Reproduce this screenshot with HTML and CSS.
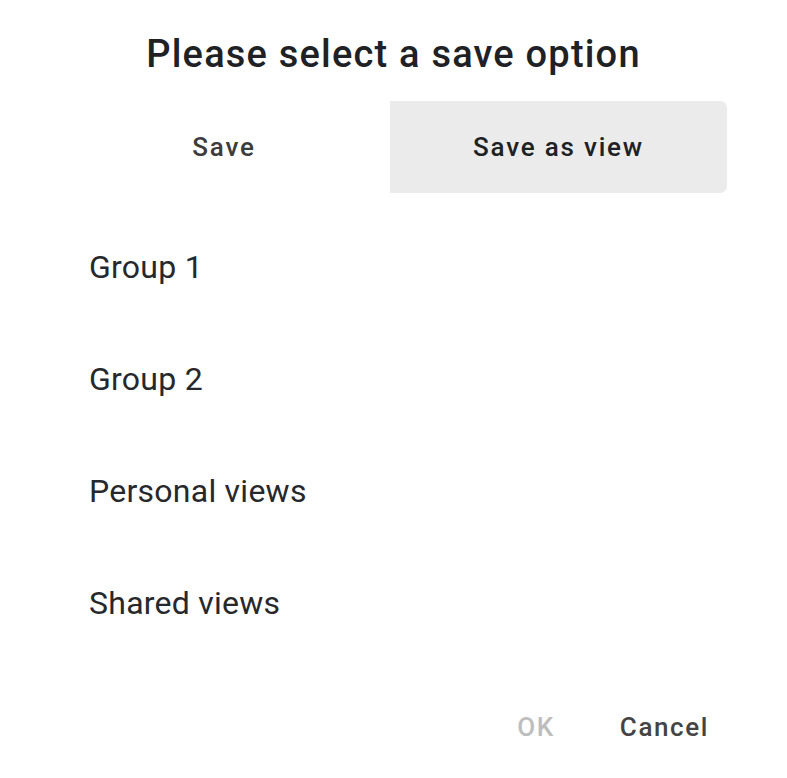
FILE: index.html
```html
<!DOCTYPE html>
<html>
<head>
<meta charset="utf-8">
<link rel="stylesheet" href="styles.css">
</head>
<body>
<div class="dialog">
  <h1 class="title">Please select a save option</h1>
  <div class="tabs">
    <div class="tab first">Save</div>
    <div class="tab active">Save as view</div>
  </div>
  <ul class="list">
    <li class="item">Group 1</li>
    <li class="item">Group 2</li>
    <li class="item">Personal views</li>
    <li class="item">Shared views</li>
  </ul>
  <div class="actions">
    <button class="btn disabled">OK</button>
    <button class="btn">Cancel</button>
  </div>
</div>
</body>
</html>
```
FILE: styles.css
```css
html, body {
  margin: 0;
  padding: 0;
  background: #ffffff;
}
body {
  font-family: Roboto, "Liberation Sans", sans-serif;
  color: #202124;
}
.dialog {
  width: 787px;
  height: 778px;
  box-sizing: border-box;
  padding: 28px 60px 0 58px;
  display: flex;
  flex-direction: column;
}
.title {
  margin: 0;
  font-size: 38px;
  font-weight: 500;
  line-height: 52px;
  text-align: center;
  color: #202124;
  letter-spacing: 1.2px;
  padding-left: 2px;
}
.tabs {
  margin-top: 21px;
  display: flex;
  height: 92px;
}
.tab {
  display: flex;
  align-items: center;
  justify-content: center;
  font-size: 26px;
  font-weight: 500;
  letter-spacing: 1.8px;
  color: #3c3c3c;
}
.tab.first {
  width: 332px;
}
.tab.active {
  flex: 1;
  background: #ebebeb;
  border-radius: 0 7px 7px 0;
  color: #202124;
}
.list {
  list-style: none;
  margin: 18px 0 0;
  padding: 0 0 0 31px;
}
.item {
  height: 112px;
  display: flex;
  align-items: center;
  font-size: 32px;
  color: #26282b;
  letter-spacing: 0.25px;
}
.actions {
  margin-top: 44px;
  display: flex;
  justify-content: flex-end;
  gap: 45px;
  padding-right: 8px;
}
.btn {
  background: none;
  border: none;
  font-family: Roboto, "Liberation Sans", sans-serif;
  font-size: 26px;
  font-weight: 500;
  letter-spacing: 1.6px;
  color: #444444;
  padding: 8px 10px;
  line-height: 32px;
}
.btn.disabled {
  color: #bdbdbd;
}
```
